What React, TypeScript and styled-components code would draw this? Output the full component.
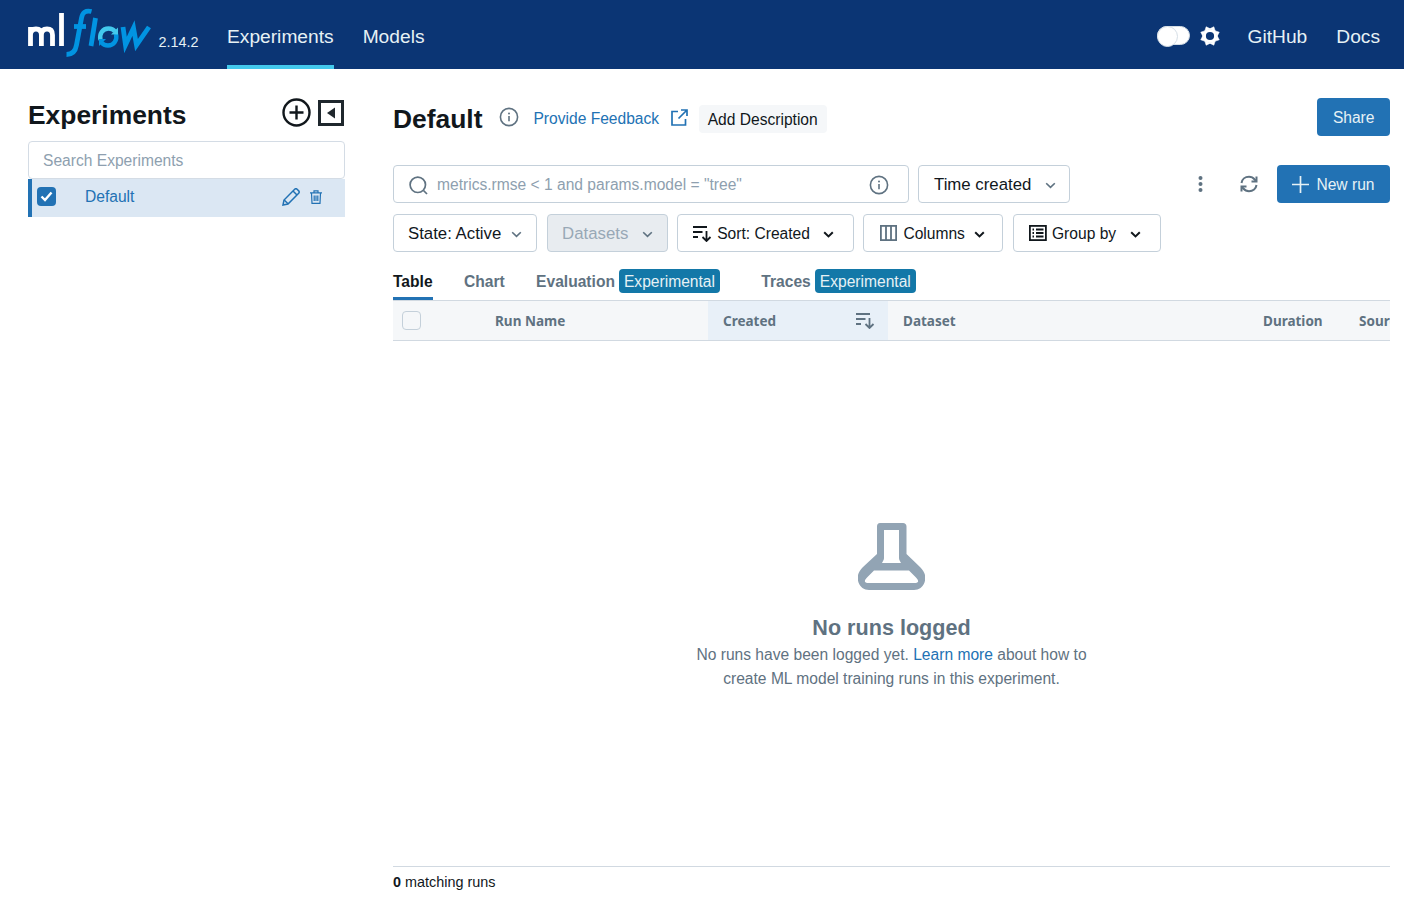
import React from "react";
import styled, { createGlobalStyle } from "styled-components";

const Global = createGlobalStyle`
  html, body { margin: 0; padding: 0; background: #fff; overflow: hidden; }
  body { font-family: "Liberation Sans", Arial, sans-serif; font-size: 15.6px; color: #11171c; }
  * { box-sizing: border-box; }
`;

const Shell = styled.div`display: flex; flex-direction: column; height: 911px; width: 1404px;`;

const Header = styled.header`
  height: 69px; flex: none; background: #0b3574; display: flex; align-items: stretch;
  padding: 0 24px 0 28px; color: #e6f1f5;
`;
const LogoBox = styled.div`display: flex; align-items: flex-start; padding-top: 8px; width: 199px; flex: none;`;
const Version = styled.span`font-size: 14.4px; color: #e6f1f5; margin: 26px 0 0 5.5px; line-height: 16px;`;
const HeaderNav = styled.nav`display: flex; gap: 29px; flex: 1;`;
const NavItem = styled.a<{ $active?: boolean }>`
  font-size: 19.2px; line-height: 23px; color: #e6f1f5; display: block; height: 69px; padding-top: 25px;
  border-bottom: 4px solid ${(p) => (p.$active ? "#43c9ed" : "transparent")};
`;
const HeaderRight = styled.div`display: flex; align-items: flex-start;`;
const Toggle = styled.div`
  width: 33px; height: 19px; border-radius: 10px; background: #fff; margin-top: 26px; position: relative;
  border: 1px solid #d5dee6;
  &::after { content: ""; position: absolute; left: -1px; top: -1px; width: 19px; height: 19px; border-radius: 50%; background: #fff; border: 1px solid #d5dee6; }
`;
const GearWrap = styled.div`margin: 26px 28px 0 10px; width: 20px; height: 20px;`;
const HeaderLinks = styled.div`display: flex; gap: 29px;`;

const Body = styled.div`flex: 1; display: flex; min-height: 0;`;

const Sidebar = styled.aside`width: 393px; flex: none; padding: 29px 48px 0 28px;`;
const SideHead = styled.div`display: flex; align-items: flex-start; justify-content: space-between; height: 43px; padding-right: 1px;`;
const SideTitle = styled.h1`font-size: 26.4px; line-height: 32px; font-weight: 700; margin: 1px 0 0; color: #11171c;`;
const SideIcons = styled.div`display: flex; align-items: center; gap: 7px;`;
const SideSearch = styled.input`
  display: block; width: 100%; height: 38px; border: 1px solid #d4dce5; border-radius: 4px; padding: 2px 14px 0;
  font: 15.6px "Liberation Sans", Arial, sans-serif; outline: none;
  &::placeholder { color: #8e9faf; opacity: 1; }
`;
const SideItem = styled.div`
  height: 38px; display: flex; align-items: center; background: #dbe7f3; border-left: 4px solid #2272b4; padding: 0 0 3px 5px;
`;
const CheckBox = styled.div`width: 19px; height: 19px; border-radius: 4px; background: #2272b4; display: flex; align-items: center; justify-content: center;`;
const SideName = styled.span`color: #2272b4; margin-left: 29px; flex: 1;`;
const SideActions = styled.div`display: flex; align-items: center; gap: 10px; margin: 0 23px 0 0;`;

const Main = styled.main`flex: 1; display: flex; flex-direction: column; padding: 29px 14px 0 0; min-width: 0;`;
const TitleRow = styled.div`display: flex; align-items: center; height: 38px;`;
const PageTitle = styled.h2`font-size: 26.4px; line-height: 32px; font-weight: 700; margin: 4px 17px 0 0; color: #11171c;`;
const FeedbackLink = styled.a`color: #2272b4; margin: 4px 10px 0 14px;`;
const ExternalIcon = styled.svg`margin-left: 2px; flex: none;`;
const DescButton = styled.div`
  height: 28px; background: #f5f7f9; border-radius: 4px; padding: 0 9px; line-height: 29px; margin: 4px 0 0 10.5px; color: #11171c;
`;
const Spacer = styled.div`flex: 1;`;
const PrimaryButton = styled.button<{ $gap?: number }>`
  height: 38px; border: 0; border-radius: 4px; background: #2272b4; color: #e6f1f5; padding: 2px 15.5px 0;
  font: 15.6px "Liberation Sans", Arial, sans-serif; display: flex; align-items: center; gap: ${(p) => p.$gap ?? 6}px;
  & > svg { margin-top: -2px; }
`;
const SearchRow = styled.div`display: flex; align-items: center; gap: 9px; margin-top: 29px; height: 38px;`;
const SearchBox = styled.div`
  width: 516px; height: 38px; border: 1px solid #c4d0da; border-radius: 4px; display: flex; align-items: center;
  padding: 2px 19px 0 15px; color: #8e9faf;
`;
const SearchText = styled.span`margin-left: 9px; flex: 1; color: #8e9faf;`;
const FilterRow = styled.div`display: flex; gap: 9.6px; margin-top: 11px; height: 38px;`;
const FilterButton = styled.div<{ $w: number; $disabled?: boolean; $pad?: number; $large?: boolean }>`
  width: ${(p) => p.$w}px; height: 38px; flex: none; border: 1px solid #c4d0da; border-radius: 4px;
  background: ${(p) => (p.$disabled ? "#e8ecf0" : "#fff")}; color: ${(p) => (p.$disabled ? "#98a8b6" : "#11171c")};
  display: flex; align-items: center; padding: 2px 0 0 ${(p) => p.$pad ?? 14}px; font-size: ${(p) => (p.$large ? "16.8px" : "15.6px")};
`;
const Chevron = styled.svg<{ $gap: number }>`margin-left: ${(p) => p.$gap}px; flex: none;`;
const IconGap = styled.span<{ $gap?: number }>`display: flex; margin-top: -2px; margin-right: ${(p) => p.$gap ?? 5}px;`;
const RightTools = styled.div`margin-left: auto; display: flex; align-items: center;`;
const ToolIcon = styled.div<{ $mr: number }>`display: flex; margin-right: ${(p) => p.$mr}px;`;

const Tabs = styled.div`display: flex; height: 49px; align-items: flex-end; gap: 31.4px; border-bottom: 1px solid #d1d9e1;`;
const Tab = styled.div<{ $active?: boolean }>`
  height: 31px; display: flex; align-items: flex-start; font-weight: 700; line-height: 26px;
  color: ${(p) => (p.$active ? "#11171c" : "#5f7281")};
  border-bottom: 3px solid ${(p) => (p.$active ? "#2272b4" : "transparent")};
`;
const TabGroup = styled.div`display: flex; gap: 4px; margin-right: 10px;`;
const Badge = styled.span`
  height: 24px; background: #1378a8; color: #e6f1f5; border-radius: 4px; padding: 0 5px; font-weight: 400; line-height: 25px;
`;

const TableHead = styled.div`
  display: grid; grid-template-columns: 87px 228px 180px 360px 96px 46px; height: 40px; background: #f5f7f9;
  border-bottom: 1px solid #d1d9e1; overflow: hidden; flex: none;
`;
const HeadCell = styled.div<{ $sorted?: boolean }>`
  display: flex; align-items: center; justify-content: space-between; padding: 0 13px 0 15px; white-space: nowrap;
  font: 700 13.5px "Noto Sans", "Open Sans", sans-serif; color: #5f7281; background: ${(p) => (p.$sorted ? "#e8f0f8" : "transparent")};
`;
const HeadCheck = styled.div`width: 19px; height: 19px; margin-left: 9px; align-self: center; border: 1.5px solid #c4d0da; border-radius: 4px; background: #f5f7f9;`;

const Empty = styled.div`flex: 1; display: flex; flex-direction: column; align-items: center; padding-top: 182px;`;
const EmptyTitle = styled.h3`font-size: 21.6px; line-height: 28px; font-weight: 700; color: #5f7281; margin: 24px 0 1px;`;
const EmptyText = styled.p`margin: 0; width: 420px; text-align: center; line-height: 24px; color: #5f7281;`;
const LearnLink = styled.a`color: #2272b4;`;
const Footer = styled.div`height: 45px; flex: none; border-top: 1px solid #d1d9e1; padding-top: 7px; font-size: 14.4px; line-height: 16px; color: #11171c;`;

const Logo = () => (
  <svg width="125" height="50" viewBox="28 8 125 50" role="img" aria-label="mlflow">
    <g fill="none" stroke="#fff" strokeWidth="4.8">
      <path d="M30.5 46V27M30.5 35c0-4 2-6 5.5-6s5.4 2 5.4 6v11M41.4 35c0-4 2-6 5.6-6s5.5 2 5.5 6v11" />
      <path d="M61.5 13v33" />
    </g>
    <g fill="none" stroke="#0194e2" strokeWidth="4.8" strokeLinecap="butt">
      <path d="M91.5 11.5c-6-1.5-9 1-10 6.5l-5 27c-1 6-3.5 9.5-10 9.5" />
      <path d="M74 26.5h12" />
      <path d="M95.5 18 91 46" />
      <path d="M123 27l2.5 18 8-17 3 17 12.5-18" />
    </g>
    <g fill="none" stroke="#43c9ed" strokeWidth="4.4">
      <path d="M100.5 40c-1.5-6 2-11.5 8-11.5 3 0 5 1 6.5 3" />
      <path d="M116 34c1.5 6-2 11.5-8 11.5-3 0-5-1-6.5-3" stroke="#0194e2" />
    </g>
    <path d="M118 27.5v7h-7z" fill="#43c9ed" />
    <path d="M99 46v-7h7z" fill="#0194e2" />
  </svg>
);

const Gear = () => (
  <svg width="20" height="20" viewBox="-10 -10 20 20">
    {[0, 45, 90, 135, 180, 225, 270, 315].map((a) => (
      <path key={a} d="M-3 -6.5 L0 -10 L3 -6.5z" fill="#fff" stroke="#fff" strokeWidth="0.5" strokeLinejoin="round" transform={`rotate(${a + 22.5})`} />
    ))}
    <circle r="5.6" fill="none" stroke="#fff" strokeWidth="3" />
  </svg>
);

const ChevronIcon = ({ gap, color = "#11171c", weight = 1.6 }: { gap: number; color?: string; weight?: number }) => (
  <Chevron $gap={gap} width="11" height="7" viewBox="0 0 11 7">
    <path d="M1.2 1.2 5.5 5.4 9.8 1.2" fill="none" stroke={color} strokeWidth={weight} />
  </Chevron>
);

const Info = () => (
  <svg width="20" height="20" viewBox="0 0 20 20">
    <circle cx="10" cy="10" r="8.6" fill="none" stroke="#5f7281" strokeWidth="1.6" />
    <path d="M10 9v5.2" stroke="#5f7281" strokeWidth="1.6" />
    <circle cx="10" cy="6.4" r="1" fill="#5f7281" />
  </svg>
);

const SortIcon = ({ color = "#11171c" }: { color?: string }) => (
  <svg width="19" height="17" viewBox="0 0 19 17" fill="none" stroke={color} strokeWidth="1.8">
    <path d="M0 2h14M0 7h9.5M0 12h5" />
    <path d="M13.5 6v10M9.5 12l4 4 4-4" />
  </svg>
);

const App = () => (
  <Shell>
    <Global />
    <Header>
      <LogoBox>
        <Logo />
        <Version>2.14.2</Version>
      </LogoBox>
      <HeaderNav>
        <NavItem $active>Experiments</NavItem>
        <NavItem>Models</NavItem>
      </HeaderNav>
      <HeaderRight>
        <Toggle />
        <GearWrap><Gear /></GearWrap>
        <HeaderLinks>
          <NavItem>GitHub</NavItem>
          <NavItem>Docs</NavItem>
        </HeaderLinks>
      </HeaderRight>
    </Header>
    <Body>
      <Sidebar>
        <SideHead>
          <SideTitle>Experiments</SideTitle>
          <SideIcons>
            <svg width="29" height="29" viewBox="0 0 29 29" fill="none" stroke="#11171c" strokeWidth="2.4">
              <circle cx="14.5" cy="14.5" r="13" />
              <path d="M14.5 7.5v14M7.5 14.5h14" />
            </svg>
            <svg width="26" height="26" viewBox="0 0 26 26">
              <rect x="1.5" y="1.5" width="23" height="23" fill="#fff" stroke="#1f272d" strokeWidth="3" />
              <path d="M17 7.5v11L9 13z" fill="#1f272d" />
            </svg>
          </SideIcons>
        </SideHead>
        <SideSearch placeholder="Search Experiments" readOnly />
        <SideItem>
          <CheckBox>
            <svg width="13" height="11" viewBox="0 0 13 11"><path d="M1.5 5.5 5 9l6.5-7.5" fill="none" stroke="#fff" strokeWidth="2.4" /></svg>
          </CheckBox>
          <SideName>Default</SideName>
          <SideActions>
            <svg width="18" height="18" viewBox="0 0 18 18" fill="none" stroke="#2272b4" strokeWidth="1.5">
              <path d="M1 17l1-5L12.7 1.3c.7-.7 1.7-.7 2.4 0l1.6 1.6c.7.7.7 1.7 0 2.4L6 16z" />
              <path d="M11 3l4 4M2.2 12l3.8 3.8" />
            </svg>
            <svg width="12" height="14" viewBox="0 0 12 14" fill="none" stroke="#2272b4" strokeWidth="1.2">
              <path d="M0 2.8h12M4 2.6V.8h4v1.8M1.5 3l.5 10.3h8L10.5 3" />
              <path d="M4.2 5.5v5.5M6 5.5v5.5M7.8 5.5v5.5" />
            </svg>
          </SideActions>
        </SideItem>
      </Sidebar>
      <Main>
        <TitleRow>
          <PageTitle>Default</PageTitle>
          <Info />
          <FeedbackLink>Provide Feedback</FeedbackLink>
          <ExternalIcon width="17" height="17" viewBox="0 0 17 17" fill="none" stroke="#2272b4" strokeWidth="1.7">
            <path d="M7 2.5H1V16h13.5V10" />
            <path d="M7.5 9.5 16 1M10 1h6v6" />
          </ExternalIcon>
          <DescButton>Add Description</DescButton>
          <Spacer />
          <PrimaryButton>Share</PrimaryButton>
        </TitleRow>
        <SearchRow>
          <SearchBox>
            <svg width="19" height="19" viewBox="0 0 19 19" fill="none" stroke="#5f7281" strokeWidth="1.7">
              <circle cx="8.8" cy="8.8" r="7.7" />
              <path d="m14.5 14.5 3.5 3.5" />
            </svg>
            <SearchText>metrics.rmse &lt; 1 and params.model = "tree"</SearchText>
            <Info />
          </SearchBox>
          <FilterButton $w={152} $pad={15} $large>
            Time created
            <ChevronIcon gap={14} color="#5f7281" />
          </FilterButton>
          <RightTools>
            <ToolIcon $mr={37}>
              <svg width="5" height="16" viewBox="0 0 5 16" fill="#5f7281">
                <circle cx="2.5" cy="2" r="2" /><circle cx="2.5" cy="8" r="2" /><circle cx="2.5" cy="14" r="2" />
              </svg>
            </ToolIcon>
            <ToolIcon $mr={19}>
              <svg width="18" height="18" viewBox="0 0 18 18" fill="none" stroke="#5f7281" strokeWidth="2">
                <path d="M1.5 8C2 4.5 5 1.8 9 1.8c2.5 0 4.3 1 5.7 2.7L16 6" />
                <path d="M16.5 1.5V6.5H11.5" />
                <path d="M16.5 10c-.5 3.5-3.5 6.200-7.500 6.200-2.500 0-4.300-1-5.700-2.700L2 12" />
                <path d="M1.5 16.5v-5h5" />
              </svg>
            </ToolIcon>
            <PrimaryButton $gap={7}>
              <svg width="17" height="17" viewBox="0 0 17 17" stroke="#e6f1f5" strokeWidth="1.7"><path d="M8.5 0v17M0 8.5h17" /></svg>
              New run
            </PrimaryButton>
          </RightTools>
        </SearchRow>
        <FilterRow>
          <FilterButton $w={144} $large>State: Active<ChevronIcon gap={10} color="#5f7281" /></FilterButton>
          <FilterButton $w={121} $large $pad={14.5} $disabled>Datasets<ChevronIcon gap={14} color="#5f7281" /></FilterButton>
          <FilterButton $w={176.6} $pad={15}>
            <IconGap $gap={5}><SortIcon /></IconGap>Sort: Created<ChevronIcon gap={13} weight={2} />
          </FilterButton>
          <FilterButton $w={140} $pad={16}>
            <IconGap $gap={6}>
              <svg width="17" height="16" viewBox="0 0 17 16" fill="none" stroke="#5f7281" strokeWidth="1.8">
                <rect x=".9" y=".9" width="15.2" height="14.2" /><path d="M6 .9v14.2M11 .9v14.2" />
              </svg>
            </IconGap>
            Columns<ChevronIcon gap={9} weight={2} />
          </FilterButton>
          <FilterButton $w={148} $pad={15}>
            <IconGap>
              <svg width="18" height="16" viewBox="0 0 18 16" fill="none" stroke="#11171c" strokeWidth="1.8">
                <rect x=".9" y=".9" width="16" height="14.2" /><path d="M3.5 4.5H5M7 4.500h7.500M3.500 8H5M7 8h7.500M3.500 11.500H5M7 11.500h7.500" />
              </svg>
            </IconGap>
            Group by<ChevronIcon gap={14} weight={2} />
          </FilterButton>
        </FilterRow>
        <Tabs>
          <Tab $active>Table</Tab>
          <Tab>Chart</Tab>
          <Tab><TabGroup>Evaluation <Badge>Experimental</Badge></TabGroup></Tab>
          <Tab><TabGroup>Traces <Badge>Experimental</Badge></TabGroup></Tab>
        </Tabs>
        <TableHead>
          <HeadCheck />
          <HeadCell>Run Name</HeadCell>
          <HeadCell $sorted>Created<SortIcon color="#5f7281" /></HeadCell>
          <HeadCell>Dataset</HeadCell>
          <HeadCell>Duration</HeadCell>
          <HeadCell>Source</HeadCell>
        </TableHead>
        <Empty>
          <svg width="67" height="67" viewBox="0 0 67 67" fill="#92a4b4" fillRule="evenodd">
            <path d="M22 0h23c2 0 3.500 1.500 3.500 3.500V31L62 44c5 5 6.500 10 4.500 15.500C65 64 61 67 56 67H11C6 67 2 64 .5 59.500-1.500 54 0 49 5 44l14-13V3.500C19 1.500 20 0 22 0ZM26 7v28c0 1.500-.8 3-2 5h19c-1.200-2-2-3.500-2-5V7ZM16 47.500 9.500 54c-2 2-3 3.500-2.500 4.800.4.800 1.500 1.200 4 1.200h45c2.500 0 3.600-.4 4-1.200.5-1.300-.5-2.800-2.500-4.800L51 47.500Z" />
          </svg>
          <EmptyTitle>No runs logged</EmptyTitle>
          <EmptyText>No runs have been logged yet. <LearnLink>Learn more</LearnLink> about how to create ML model training runs in this experiment.</EmptyText>
        </Empty>
        <Footer><b>0</b> matching runs</Footer>
      </Main>
    </Body>
  </Shell>
);

export default App;
